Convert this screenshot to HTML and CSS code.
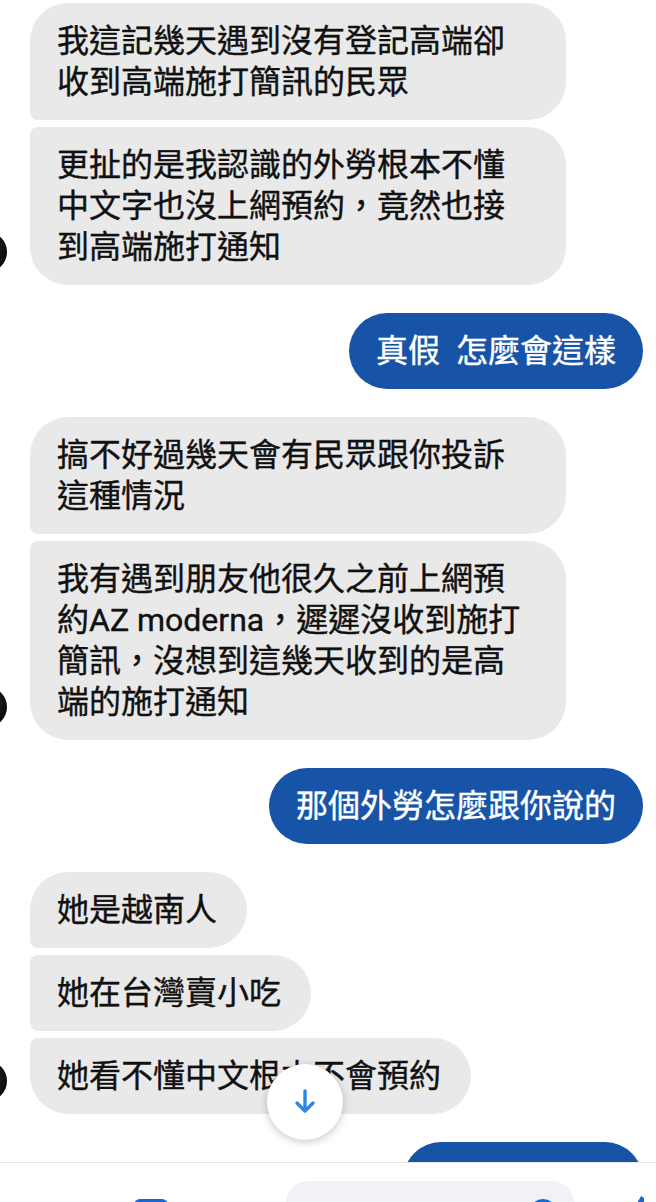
FILE: index.html
```html
<!doctype html>
<html lang="zh-Hant">
  <head>
    <meta charset="UTF-8" />
    <meta name="viewport" content="width=device-width, initial-scale=1.0" />
    <title>訊息</title>
    <link rel="stylesheet" href="styles.css">
  </head>
  <body>
    <div class="screen">
      <div class="thread">
        <div class="group in">
          <div class="avatar"></div>
          <div class="stack">
            <div class="bubble first">我這記幾天遇到沒有登記高端卻收到高端施打簡訊的民眾</div>
            <div class="bubble last">更扯的是我認識的外勞根本不懂中文字也沒上網預約，竟然也接到高端施打通知</div>
          </div>
        </div>

        <div class="group out">
          <div class="stack">
            <div class="bubble">真假&nbsp;&nbsp;怎麼會這樣</div>
          </div>
        </div>

        <div class="group in">
          <div class="avatar"></div>
          <div class="stack">
            <div class="bubble first">搞不好過幾天會有民眾跟你投訴這種情況</div>
            <div class="bubble last">我有遇到朋友他很久之前上網預約AZ moderna，遲遲沒收到施打簡訊，沒想到這幾天收到的是高端的施打通知</div>
          </div>
        </div>

        <div class="group out">
          <div class="stack">
            <div class="bubble">那個外勞怎麼跟你說的</div>
          </div>
        </div>

        <div class="group in">
          <div class="avatar"></div>
          <div class="stack">
            <div class="bubble first">她是越南人</div>
            <div class="bubble">她在台灣賣小吃</div>
            <div class="bubble last">她看不懂中文根本不會預約</div>
          </div>
        </div>

        <div class="group out">
          <div class="stack">
            <div class="bubble tall">&nbsp;</div>
          </div>
        </div>
      </div>

      <!-- scroll-to-latest button -->
      <button class="jump" type="button">
        <svg width="30" height="30" viewBox="0 0 30 30">
          <path d="M15 4 V24 M7 16 L15 24 L23 16" fill="none" stroke="#2b87e3" stroke-width="3.4" stroke-linecap="round" stroke-linejoin="round" />
        </svg>
      </button>

      <div class="composer">
        <svg class="icon apps" width="22" height="22" viewBox="0 0 22 22">
          <circle cx="11" cy="11" r="10" fill="#1a66d1" />
        </svg>
        <svg class="icon camera" width="34" height="28" viewBox="0 0 34 28">
          <rect x="0" y="0" width="34" height="26" rx="6" fill="#1a66d1" />
        </svg>
        <div class="input">
          <span class="placeholder">Aa</span>
          <svg class="icon emoji" width="30" height="30" viewBox="0 0 30 30">
            <circle cx="15" cy="15" r="14" fill="#1a66d1" />
          </svg>
        </div>
        <svg class="icon like" width="26" height="30" viewBox="0 0 26 30">
          <path d="M12 2 C10 6 8 9 6 12 L6 28 L22 28 L24 14 L15 14 L15 4 Z" fill="#1a66d1" />
        </svg>
      </div>
    </div>
  </body>
</html>
```

FILE: styles.css
```css
body {
  margin: 0;
  padding: 0;
  background-color: #fff;
  font-family: Roboto, "Noto Sans CJK TC", sans-serif;
  overflow: hidden;
}

.screen {
  position: relative;
  width: 656px;
  height: 1202px;
  display: flex;
  flex-direction: column;
  overflow: hidden;
}

.thread {
  height: 1162px;
  flex-shrink: 0;
  overflow: hidden;
  display: flex;
  flex-direction: column;
  gap: 28px;
  padding: 3px 13px 0 0;
  box-sizing: border-box;
}

.group {
  display: flex;
  align-items: flex-end;
}

.group.out {
  justify-content: flex-end;
}

.avatar {
  width: 40px;
  height: 40px;
  flex-shrink: 0;
  margin: 0 23px 13px -33px;
  border-radius: 50%;
  background: radial-gradient(circle at 40% 40%, #3a3a3a, #0c0c0c 70%);
}

.stack {
  display: flex;
  flex-direction: column;
  align-items: flex-start;
  gap: 7px;
}

.out .stack {
  align-items: flex-end;
}

.bubble {
  max-width: 536px;
  box-sizing: border-box;
  padding: 18px 30px 17px 27px;
  font-size: 32px;
  line-height: 41px;
  color: #111;
  -webkit-text-stroke: 0.4px currentColor;
  background-color: #e9e9e9;
  border-radius: 38px;
}

/* grouped incoming bubbles get tighter corners on the avatar side */
.in .bubble {
  border-radius: 8px 38px 38px 8px;
}

.in .bubble.first {
  border-top-left-radius: 38px;
}

.in .bubble.last {
  border-bottom-left-radius: 38px;
}

.out .bubble {
  padding: 18px 27px 17px 27px;
  color: #fff;
  background-color: #1754a7;
}

.out .bubble.tall {
  width: 240px;
  height: 76px;
}

.jump {
  position: absolute;
  left: 267px;
  top: 1064px;
  width: 76px;
  height: 76px;
  padding: 0;
  border: none;
  border-radius: 50%;
  background-color: #fff;
  box-shadow: 0 2px 8px rgba(0, 0, 0, 0.22);
  display: flex;
  align-items: center;
  justify-content: center;
}

.composer {
  flex: 1;
  display: flex;
  align-items: flex-start;
  padding: 18px 0 0 54px;
  border-top: 1px solid #e6e6e6;
  background-color: #fff;
  overflow: hidden;
}

.icon {
  flex-shrink: 0;
  display: block;
}

.apps {
  margin-top: 20px;
}

.camera {
  margin: 18px 0 0 58px;
}

.input {
  width: 288px;
  height: 44px;
  margin-left: 118px;
  padding: 17px 16px 0 22px;
  box-sizing: border-box;
  display: flex;
  justify-content: space-between;
  align-items: flex-start;
  border-radius: 22px;
  background-color: #f0f2f5;
}

.placeholder {
  visibility: hidden;
  font-size: 28px;
}

.like {
  margin: 13px 0 0 55px;
}
```
